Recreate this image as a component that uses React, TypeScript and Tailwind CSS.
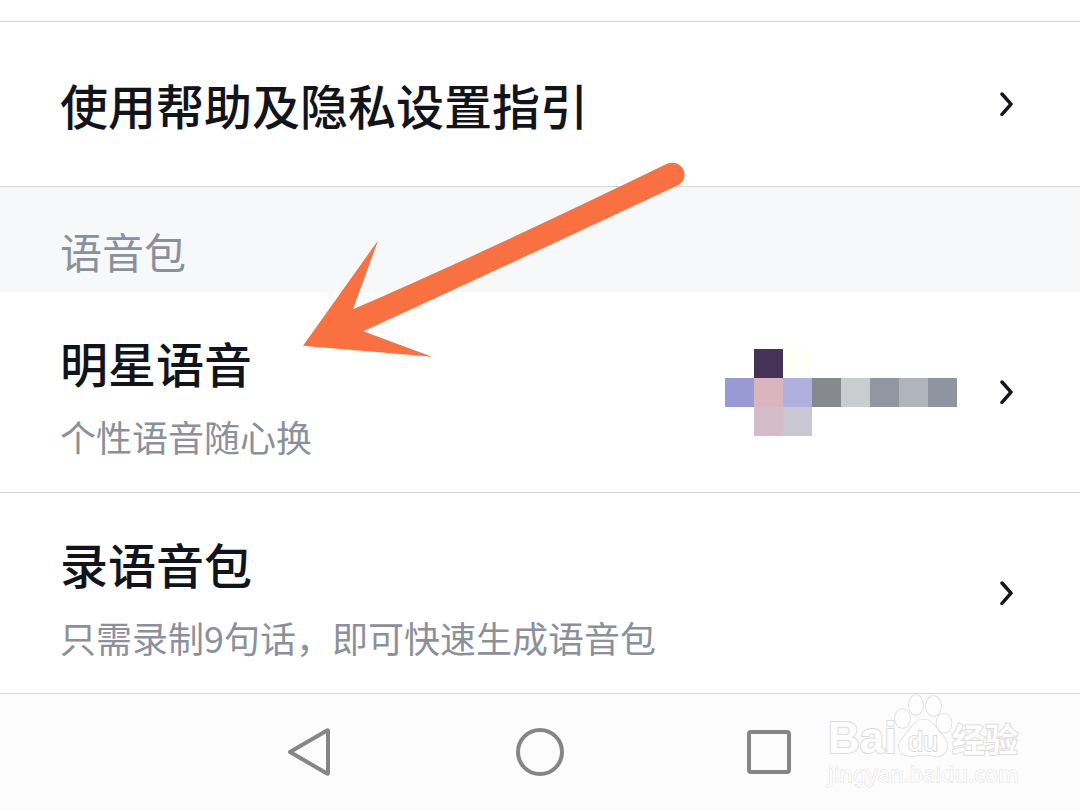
import type { ReactNode } from "react";

function Chevron() {
  return (
    <svg
      className="size-6 shrink-0"
      viewBox="0 0 24 24"
      fill="none"
      stroke="#14161d"
      strokeWidth="3.5"
      strokeLinecap="round"
      strokeLinejoin="round"
      aria-hidden="true"
    >
      <path d="M6 2 15 12.2 6 22.4" />
    </svg>
  );
}

const mosaicColors = [
  "bg-transparent", "bg-[#443257]", "bg-[#fffffa]", "bg-transparent", "bg-transparent", "bg-transparent", "bg-transparent", "bg-transparent",
  "bg-[#9999d5]", "bg-[#d9b5be]", "bg-[#b0afde]", "bg-[#868a8f]", "bg-[#c9cdcf]", "bg-[#9296a0]", "bg-[#b0b4bc]", "bg-[#9094a0]",
  "bg-transparent", "bg-[#d5bcc9]", "bg-[#c9c7d2]", "bg-transparent", "bg-transparent", "bg-transparent", "bg-transparent", "bg-transparent",
];

function Mosaic() {
  return (
    <span className="grid shrink-0 grid-cols-8" aria-hidden="true">
      {mosaicColors.map((color, i) => (
        <span key={i} className={`size-[29px] ${color}`} />
      ))}
    </span>
  );
}

function Row({ title, note, children }: { title: string; note?: string; children?: ReactNode }) {
  return (
    <li className="border-b border-[#d3d5d8]">
      <a
        href="#"
        className={`flex items-center gap-[39px] px-[60px] ${note ? "min-h-[200px]" : "min-h-[164px]"}`}
      >
        <span className={`flex min-w-0 flex-1 flex-col gap-4 ${note ? "pt-2" : ""}`}>
          <span className="text-[48px] leading-[64px] font-medium text-[#12141b]">{title}</span>
          {note && <span className="text-[36px] leading-[52px] text-[#8b909a]">{note}</span>}
        </span>
        {children}
        <Chevron />
      </a>
    </li>
  );
}

function PointerArrow() {
  return (
    <svg
      className="pointer-events-none absolute top-[150px] left-[290px] h-[220px] w-[410px]"
      viewBox="290 150 410 220"
      fill="#f97041"
      aria-hidden="true"
    >
      <path d="M303 345.700 378 240.500 353 309.300Q480 254.500 667.500 163.600C681.500 158.500 691 176 679.500 184.500Q500 268.500 363.300 331.300L432 356.800Z" />
    </svg>
  );
}

function Watermark() {
  return (
    <div className="absolute top-0 right-[62px] flex w-[190px] flex-col text-[#fefefe] [paint-order:stroke_fill] [-webkit-text-stroke:2px_#dcdcdc] [stroke-linejoin:round]">
      <div className="flex h-[66px] items-end">
        <span className="w-[66px] shrink-0 font-['Liberation_Sans'] text-[44px] leading-[44px] font-bold">Bai</span>
        <span className="relative flex h-[66px] w-[58px] shrink-0 items-end justify-center">
          <svg
            className="absolute inset-x-0 top-0 h-[64px] w-[58px]"
            viewBox="0 0 58 64"
            fill="#fefefe"
            stroke="#dcdcdc"
            strokeWidth="1.6"
            aria-hidden="true"
          >
            <ellipse cx="8.5" cy="24.500" rx="7.500" ry="9.500" />
            <ellipse cx="22" cy="11" rx="7" ry="10" />
            <ellipse cx="39.500" cy="12" rx="7.500" ry="10" />
            <ellipse cx="50" cy="29" rx="7.500" ry="9.500" />
            <path d="M29.500 25.500c8 0 11 6 15 11.500 5 5.500 8.500 9 8.500 15 0 8-6 11-12 10-5-.8-7-1.300-11.500-1.300s-7 .8-12 1.300C11 62.500 5 60 5 52.500c0-6 5-10 9.500-15.500 4.500-5.500 7-11.500 15-11.500Z" />
          </svg>
          <span className="relative font-['Liberation_Sans'] text-[27px] leading-[36px]">du</span>
        </span>
        <span className="shrink-0 font-['Noto_Sans_CJK_SC'] text-[33px] leading-[44px] font-bold">经验</span>
      </div>
      <span className="font-['Noto_Sans'] text-[22px] leading-[26px] [-webkit-text-stroke:1px_#dcdcdc]">jingyan.baidu.com</span>
    </div>
  );
}

export default function App() {
  return (
    <div className="relative flex min-h-screen flex-col bg-white font-['Noto_Sans_CJK_SC',sans-serif]">
      <main>
        <ul className="mt-[21px] border-t border-[#d3d5d8]">
          <Row title="使用帮助及隐私设置指引" />
        </ul>
        <h2 className="bg-[#f6f8fa] px-[60px] pt-[34px] pb-[11px] text-[42px] leading-[60px] text-[#8b909a]">
          语音包
        </h2>
        <ul>
          <Row title="明星语音" note="个性语音随心换">
            <Mosaic />
          </Row>
          <Row title="录语音包" note="只需录制9句话，即可快速生成语音包" />
        </ul>
      </main>
      <nav className="relative flex flex-1 items-center justify-center gap-[182px] bg-[#fcfcfc]">
        <button type="button" aria-label="返回" className="size-12">
          <svg viewBox="0 0 48 48" fill="none" stroke="#868686" strokeWidth="4" strokeLinejoin="round" aria-hidden="true">
            <path d="M4 24 41 2.500Q42 2 42 3V45Q42 46 41 45.500Z" />
          </svg>
        </button>
        <button type="button" aria-label="主页" className="size-12">
          <svg viewBox="0 0 48 48" fill="none" stroke="#868686" strokeWidth="4" aria-hidden="true">
            <circle cx="24" cy="24" r="22" />
          </svg>
        </button>
        <button type="button" aria-label="最近任务" className="size-12">
          <svg viewBox="0 0 48 48" fill="none" stroke="#868686" strokeWidth="4" aria-hidden="true">
            <rect x="3" y="4" width="40" height="40" rx="2" />
          </svg>
        </button>
        <Watermark />
      </nav>
      <PointerArrow />
    </div>
  );
}
